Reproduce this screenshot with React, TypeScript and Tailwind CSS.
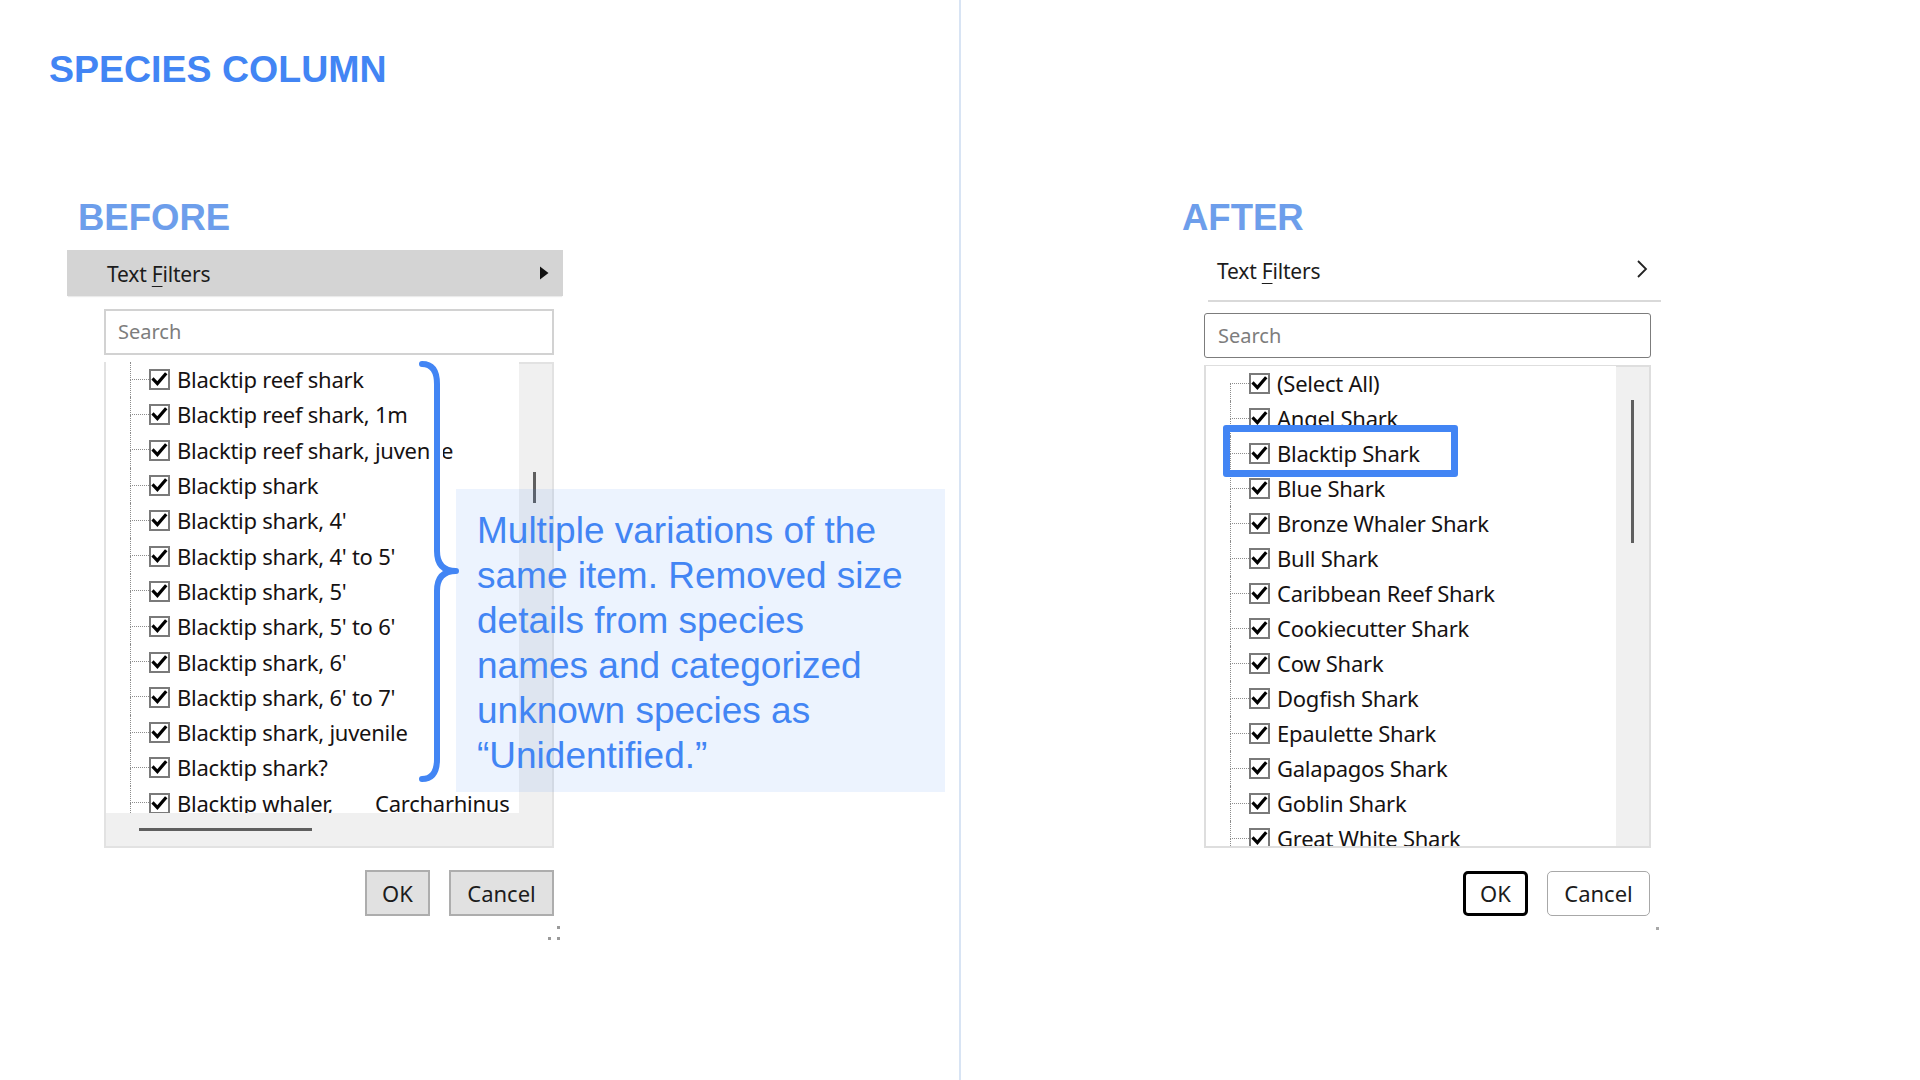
import React from "react";

const UI_FONT = "font-['Noto_Sans',sans-serif]";

const beforeItems = [
  "Blacktip reef shark",
  "Blacktip reef shark, 1m",
  "Blacktip reef shark, juvenile",
  "Blacktip shark",
  "Blacktip shark, 4'",
  "Blacktip shark, 4' to 5'",
  "Blacktip shark, 5'",
  "Blacktip shark, 5' to 6'",
  "Blacktip shark, 6'",
  "Blacktip shark, 6' to 7'",
  "Blacktip shark, juvenile",
  "Blacktip shark?",
];

const afterItems = [
  "(Select All)",
  "Angel Shark",
  "Blacktip Shark",
  "Blue Shark",
  "Bronze Whaler Shark",
  "Bull Shark",
  "Caribbean Reef Shark",
  "Cookiecutter Shark",
  "Cow Shark",
  "Dogfish Shark",
  "Epaulette Shark",
  "Galapagos Shark",
  "Goblin Shark",
  "Great White Shark",
];

function CheckBox() {
  return (
    <svg width="21" height="21" viewBox="0 0 21 21" className="shrink-0">
      <rect x="1" y="1" width="19" height="19" fill="#fff" stroke="#7a7a7a" strokeWidth="2" />
      <path d="M4.6 10.6 L8.4 14.6 L16.2 5.4" fill="none" stroke="#000" strokeWidth="3.2" strokeLinecap="square" />
    </svg>
  );
}

function TreeRow({ children, root, tall }: { children: React.ReactNode; root?: boolean; tall?: boolean }) {
  return (
    <div className={tall ? "flex h-[35.3px] items-stretch" : "flex h-[35px] items-stretch"}>
      <div className="ml-[24px] flex w-[19px] shrink-0 flex-col">
        <div
          className={
            root
              ? "h-1/2 border-b border-dotted border-[#8c8c8c]"
              : "h-1/2 border-b border-l border-dotted border-[#8c8c8c]"
          }
        />
        <div className="h-1/2 border-l border-dotted border-[#8c8c8c]" />
      </div>
      <div className="flex items-center">
        <CheckBox />
        <span className="ml-[7px] whitespace-pre text-[22px] tracking-[-0.25px] text-[#161212]">{children}</span>
      </div>
    </div>
  );
}

function Brace() {
  const d = "M7,10 Q22,10 22,30 L22,197 Q22,217 41,217 Q22,217 22,237 L22,405 Q22,425 7,425";
  return (
    <svg width="50" height="440" viewBox="0 0 50 440" className="absolute left-[415px] top-[354px]">
      <path d={d} fill="none" stroke="#fff" strokeWidth="12" strokeLinecap="round" strokeLinejoin="round" />
      <path d={d} fill="none" stroke="#4285f4" strokeWidth="6" strokeLinecap="round" strokeLinejoin="round" />
    </svg>
  );
}

function BeforePanel() {
  return (
    <div className={`flex flex-col items-start ${UI_FONT}`}>
      {/* Text Filters menu row */}
      <div className="ml-[67px] mt-[14px] flex h-[46px] w-[496px] items-center justify-between bg-[#d4d4d4] pl-[40px] pr-[14px] shadow-[0_2px_1px_-1px_rgba(0,0,0,0.08)]">
        <span className="mt-[4px] text-[21px] tracking-[-0.2px] text-[#1c1c1c]">
          Text <span className="underline underline-offset-[4px] decoration-1">F</span>ilters
        </span>
        <svg width="10" height="14" viewBox="0 0 10 14">
          <path d="M1 0.5 L9.5 7 L1 13.5 Z" fill="#111" />
        </svg>
      </div>

      {/* Search box */}
      <div className="ml-[104px] mt-[13px] flex h-[46px] w-[450px] items-center border-2 border-[#d2d2d2] bg-white pl-[12px]">
        <span className="text-[20px] text-[#7d7d7d]">Search</span>
      </div>

      {/* List with scroll bars */}
      <div className="ml-[104px] mt-[7px] flex h-[486px] w-[450px] flex-col border-2 border-[#e2e2e2]">
        <div className="flex h-[449px]">
          <div className="-mt-[2px] flex-1 overflow-hidden bg-white">
            {beforeItems.map((t) => (
              <TreeRow key={t} tall>
                {t}
              </TreeRow>
            ))}
            <TreeRow tall>
              <span className="inline-block w-[198px]">Blacktip whaler,</span>
              <span>Carcharhinus</span>
            </TreeRow>
          </div>
          <div className="w-[33px] shrink-0 bg-[#f0f0f0]">
            <div className="ml-[14px] mt-[108px] h-[31px] w-[3px] bg-[#5f5f5f]" />
          </div>
        </div>
        <div className="flex h-[33px] items-start bg-[#f0f0f0]">
          <div className="ml-[33px] mt-[15px] h-[3px] w-[173px] bg-[#5f5f5f]" />
        </div>
      </div>

      {/* Dialog buttons */}
      <div className="ml-[365px] mt-[22px] flex gap-[19px]">
        <div className="flex h-[46px] w-[65px] items-center justify-center border-2 border-[#adadad] bg-[#e1e1e1] text-[22px] text-[#1c1c1c]">
          OK
        </div>
        <div className="flex h-[46px] w-[105px] items-center justify-center border-2 border-[#adadad] bg-[#e1e1e1] text-[22px] text-[#1c1c1c]">
          Cancel
        </div>
      </div>

      {/* Resize grip */}
      <div className="ml-[548px] mt-[10px] flex w-[12px] flex-col items-end gap-[8px]">
        <div className="h-[3px] w-[3px] bg-[#9a9a9a]" />
        <div className="flex gap-[6px]">
          <div className="h-[3px] w-[3px] bg-[#9a9a9a]" />
          <div className="h-[3px] w-[3px] bg-[#9a9a9a]" />
        </div>
      </div>
    </div>
  );
}

function AfterPanel() {
  return (
    <div className={`relative flex flex-col items-start ${UI_FONT}`}>
      {/* Text Filters menu row */}
      <div className="ml-[247px] mt-[14px] flex h-[52px] w-[453px] items-start justify-between border-b-2 border-[#d9d9d9] pl-[9px] pr-[12px]">
        <span className="mt-[6px] text-[21px] tracking-[-0.2px] text-[#1c1c1c]">
          Text <span className="underline underline-offset-[4px] decoration-1">F</span>ilters
        </span>
        <svg width="14" height="20" viewBox="0 0 14 20" className="mt-[9px]">
          <path d="M3 2 L11 10 L3 18" fill="none" stroke="#222" strokeWidth="1.8" />
        </svg>
      </div>

      {/* Search box */}
      <div className="ml-[243px] mt-[11px] flex h-[45px] w-[447px] items-center rounded-[3px] border-[1.5px] border-[#7c7c7c] bg-white pl-[13px]">
        <span className="text-[20px] text-[#7d7d7d]">Search</span>
      </div>

      {/* List with scroll bar */}
      <div className="ml-[243px] mt-[7px] flex h-[483px] w-[447px] border-2 border-[#dedede]">
        <div className="-mt-[1px] flex-1 overflow-hidden bg-white">
          {afterItems.map((t, i) => (
            <TreeRow key={t} root={i === 0}>
              {t}
            </TreeRow>
          ))}
        </div>
        <div className="w-[33px] shrink-0 bg-[#f0f0f0]">
          <div className="ml-[15px] mt-[33px] h-[143px] w-[3px] bg-[#5f5f5f]" />
        </div>
      </div>

      {/* Dialog buttons */}
      <div className="ml-[502px] mt-[23px] flex gap-[19px]">
        <div className="flex h-[45px] w-[65px] items-center justify-center rounded-[5px] border-[3px] border-black bg-white text-[22px] text-[#1c1c1c]">
          OK
        </div>
        <div className="flex h-[45px] w-[103px] items-center justify-center rounded-[5px] border border-[#a8a8a8] bg-white text-[22px] text-[#1c1c1c]">
          Cancel
        </div>
      </div>
      <div className="ml-[695px] mt-[11px] h-[3px] w-[3px] bg-[#a8a8a8]" />

      {/* Highlight around the merged entry */}
      <div className="absolute left-[262px] top-[189px] h-[52px] w-[235px] rounded-[3px] border-[7px] border-[#4285f4]" />
    </div>
  );
}

export default function App() {
  return (
    <div className="flex h-[1080px] w-[1920px] overflow-hidden bg-white font-['Liberation_Sans',Arial,sans-serif]">
      {/* Left half: before */}
      <div className="relative flex w-[959px] shrink-0 flex-col">
        <h1 className="ml-[49px] mt-[51px] text-[37.5px] font-bold leading-[37px] text-[#4285f4]">SPECIES COLUMN</h1>
        <h2 className="ml-[78px] mt-[112px] text-[36.5px] font-bold leading-[36px] text-[#6d9eeb]">BEFORE</h2>
        <BeforePanel />

        <Brace />
        <div className="absolute left-[456px] top-[489px] h-[303px] w-[489px] bg-[#4285f4]/10 pl-[21px] pt-[19px]">
          <p className="text-[37px] leading-[45px] text-[#4285f4]">
            Multiple variations of the
            <br />
            same item. Removed size
            <br />
            details from species
            <br />
            names and categorized
            <br />
            unknown species as
            <br />
            “Unidentified.”
          </p>
        </div>
      </div>

      {/* Divider */}
      <div className="w-[2px] shrink-0 bg-[#d8e4f4]" />

      {/* Right half: after */}
      <div className="flex flex-1 flex-col">
        <div className="h-[200px] shrink-0" />
        <h2 className="ml-[221px] text-[36.5px] font-bold leading-[36px] text-[#6d9eeb]">AFTER</h2>
        <AfterPanel />
      </div>
    </div>
  );
}
